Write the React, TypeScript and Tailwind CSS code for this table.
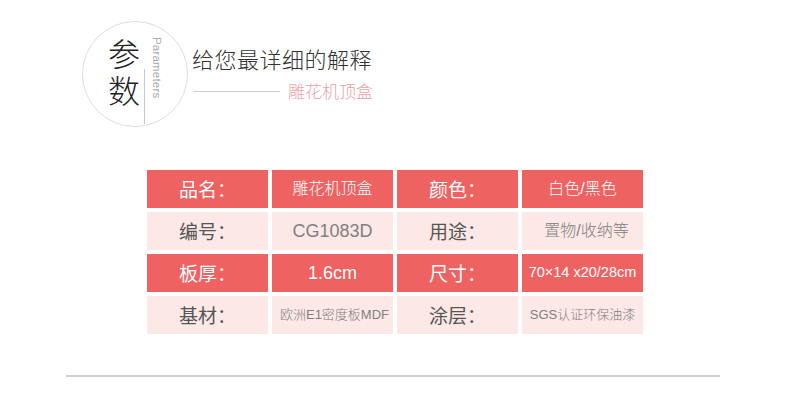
import React from "react";

const red = "bg-[#ee6262] text-white";
const pink = "bg-[#fde8e8]";

type Cell = { text: string; kind: "label" | "value"; size?: string; cls?: string };

const rows: { bg: "red" | "pink"; cells: Cell[] }[] = [
  {
    bg: "red",
    cells: [
      { text: "品名：", kind: "label" },
      { text: "雕花机顶盒", kind: "value" },
      { text: "颜色：", kind: "label" },
      { text: "白色/黑色", kind: "value" },
    ],
  },
  {
    bg: "pink",
    cells: [
      { text: "编号：", kind: "label" },
      { text: "CG1083D", kind: "value", size: "text-[18px]" },
      { text: "用途：", kind: "label" },
      { text: "置物/收纳等", kind: "value", cls: "pl-[8px]" },
    ],
  },
  {
    bg: "red",
    cells: [
      { text: "板厚：", kind: "label" },
      { text: "1.6cm", kind: "value", size: "text-[18px]" },
      { text: "尺寸：", kind: "label" },
      { text: "70×14 x20/28cm", kind: "value", size: "text-[14.5px]" },
    ],
  },
  {
    bg: "pink",
    cells: [
      { text: "基材：", kind: "label" },
      { text: "欧洲E1密度板MDF", kind: "value", size: "text-[13px]", cls: "pl-[4px]" },
      { text: "涂层：", kind: "label" },
      { text: "SGS认证环保油漆", kind: "value", size: "text-[13px]" },
    ],
  },
];

const valueFont = { fontFamily: '"Liberation Sans", "Noto Sans CJK SC", sans-serif' };

export default function App() {
  return (
    <div
      className="w-[790px] h-[400px] bg-white overflow-hidden flex flex-col"
      style={{ fontFamily: '"Noto Sans CJK SC", "Noto Sans", sans-serif' }}
    >
      {/* Header */}
      <div className="flex pl-[82px] pt-[21px]">
        <div className="w-[106px] h-[106px] rounded-full border border-[#dedede] flex pl-[24px] shrink-0">
          <div
            className="mt-[16px] w-[33px] h-[80px] whitespace-nowrap text-[32px] leading-[33px] tracking-[5px] font-light text-[#222]"
            style={{ writingMode: "vertical-rl" }}
          >
            参数
          </div>
          <div className="ml-[4px] mt-[47px] w-px h-[55px] bg-[#c8c8c8]" />
          <div
            className="ml-[6px] mt-[15px] text-[11.5px] leading-[11px] text-[#aaa] tracking-[0.2px]"
            style={{ writingMode: "vertical-rl", fontFamily: '"Liberation Sans", Arial, sans-serif' }}
          >
            Parameters
          </div>
        </div>
        <div className="ml-[4px] mt-[23px] flex flex-col">
          <div className="text-[22px] leading-[28px] text-[#333] font-light tracking-[0.5px]">
            给您最详细的解释
          </div>
          <div className="flex items-center mt-[8px]">
            <div className="w-[87px] h-px bg-[#c9d1d4] ml-[1px]" />
            <div className="ml-[8px] text-[17px] leading-[22px] text-[#eba2a2] font-light">
              雕花机顶盒
            </div>
          </div>
        </div>
      </div>

      {/* Table */}
      <div className="ml-[147px] mt-[43px] flex flex-col gap-[4px]">
        {rows.map((r, i) => (
          <div key={i} className="flex gap-[4px]">
            {r.cells.map((c, j) => (
              <div
                key={j}
                style={c.kind === "value" ? valueFont : undefined}
                className={`w-[121px] h-[38px] flex items-center justify-center whitespace-nowrap ${
                  r.bg === "red" ? red : pink
                } ${
                  c.kind === "label"
                    ? `text-[19px] ${r.bg === "red" ? "" : "text-[#555]"}`
                    : `${c.size ?? "text-[16px]"} font-light ${r.bg === "red" ? "" : "text-[#808080]"}`
                } ${c.cls ?? ""}`}
              >
                {c.text}
              </div>
            ))}
          </div>
        ))}
      </div>

      {/* Bottom rule */}
      <div className="ml-[66px] mt-[41px] w-[654px] h-[2px] bg-[#d0d0d0]" />
    </div>
  );
}
